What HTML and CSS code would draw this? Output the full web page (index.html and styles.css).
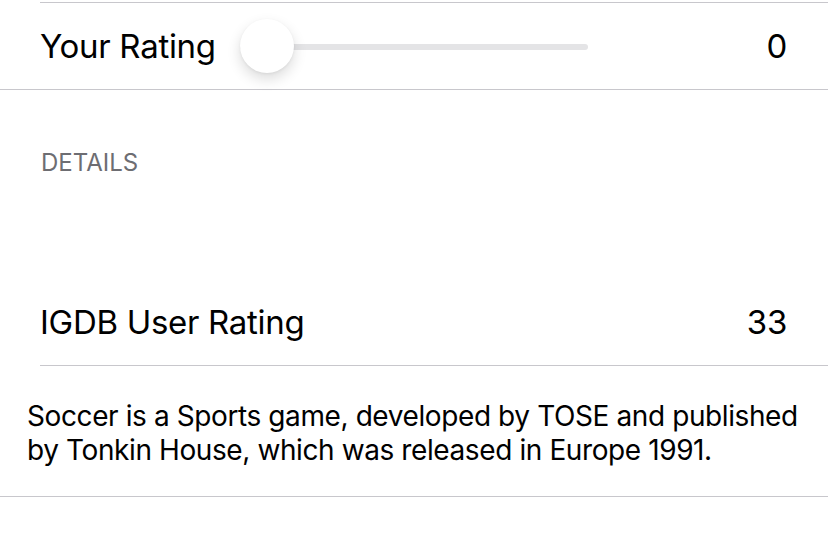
FILE: index.html
```html
<!DOCTYPE html>
<html lang="en">
<head>
    <meta charset="UTF-8">
    <meta name="viewport" content="width=device-width, initial-scale=1.0">
    <title>Soccer - Game Details</title>
    <link rel="stylesheet" href="styles.css">
</head>
<body>
    <div class="group rating-group">
        <div class="cell">
            <span class="cell-label rating-label">Your Rating</span>
            <div class="slider">
                <div class="slider-track"></div>
                <div class="slider-thumb"></div>
            </div>
            <span class="cell-value">0</span>
        </div>
    </div>

    <div class="group details-group">
        <div class="section-header">DETAILS</div>
        <div class="cell cell-last">
            <span class="cell-label">IGDB User Rating</span>
            <span class="cell-value">33</span>
        </div>
        <p class="summary">Soccer is a Sports game, developed by TOSE and published by Tonkin House, which was released in Europe 1991.</p>
    </div>
</body>
</html>
```

FILE: styles.css
```css
body {
    margin: 0;
    padding: 0;
    background-color: #ffffff;
    color: #000000;
    font-family: Inter, "Noto Sans", sans-serif;
}
.group {
    border-bottom: 1px solid #c8c7cc;
}
.rating-group {
    margin-top: 2px;
}
.cell {
    display: flex;
    align-items: center;
    height: 86px;
    margin-left: 40px;
    padding-right: 41px;
    border-top: 1px solid #c8c7cc;
    font-size: 33px;
    letter-spacing: -0.3px;
}
.cell-label {
    white-space: nowrap;
}
.rating-label {
    flex: 0 0 200px;
}
.cell-value {
    margin-left: auto;
}
.slider {
    position: relative;
    width: 348px;
    height: 54px;
}
.slider-track {
    position: absolute;
    left: 0;
    right: 0;
    top: 25px;
    height: 6px;
    border-radius: 3px;
    background-color: #e4e4e6;
}
.slider-thumb {
    position: absolute;
    left: 0;
    top: 0;
    width: 54px;
    height: 54px;
    border-radius: 50%;
    background-color: #ffffff;
    box-shadow: 0 6px 14px rgba(0, 0, 0, 0.14), 0 1px 3px rgba(0, 0, 0, 0.06);
}
.section-header {
    margin: 57px 0 0 41px;
    font-size: 24px;
    line-height: 32px;
    color: #6d6d72;
}
.cell-last {
    margin-top: 99px;
    height: 87px;
    border-top: none;
    border-bottom: 1px solid #c8c7cc;
}
.summary {
    margin: 0;
    padding: 33px 20px 29px 27px;
    font-size: 28px;
    line-height: 34px;
    letter-spacing: -0.4px;
}
```
